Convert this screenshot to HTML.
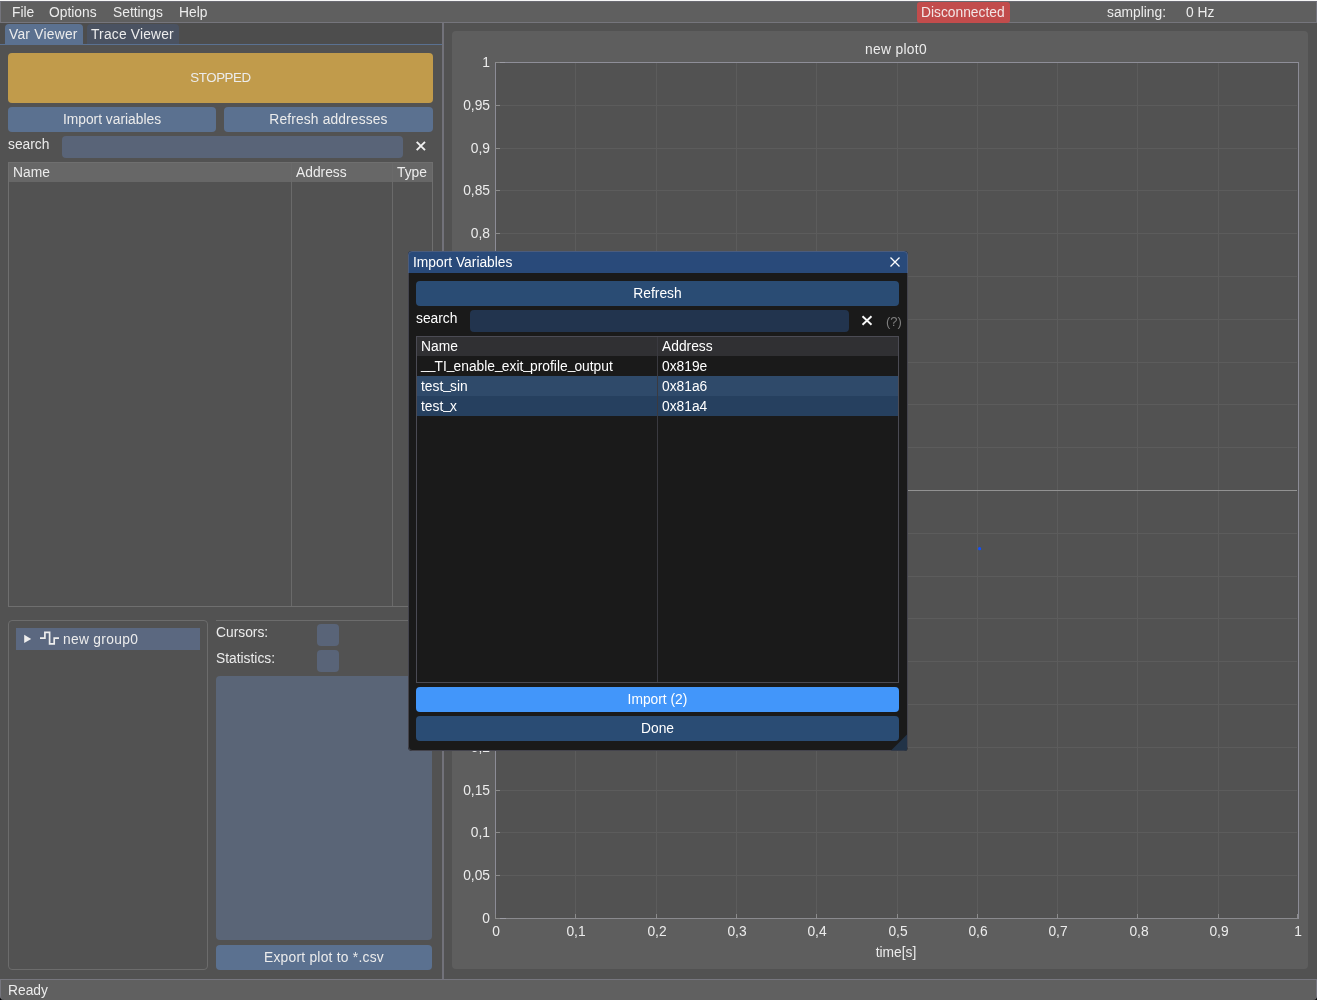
<!DOCTYPE html>
<html><head><meta charset="utf-8">
<style>
*{box-sizing:border-box;margin:0;padding:0}
html,body{width:1317px;height:1000px;overflow:hidden;background:#525252}
body{position:relative;font-family:"Liberation Sans",sans-serif;font-size:13.8px;color:#ececec}
.a{position:absolute}
.t{position:absolute;white-space:pre;line-height:18px;height:18px;will-change:transform}
.c{text-align:center}
.r{text-align:right}
.btn{position:absolute;border-radius:4px}
</style></head><body>
<!-- top white line -->
<div class="a" style="left:0;top:0;width:1317px;height:1px;background:#f6f6f6"></div>
<!-- menubar -->
<div class="a" style="left:0;top:1px;width:1317px;height:22px;background:#5f5f5f;border-top:1px solid #6a6a72;border-left:1px solid #74747c;border-right:1px solid #74747c;border-bottom:1px solid #75757c"></div>
<div class="t" style="left:12px;top:4px">File</div>
<div class="t" style="left:49px;top:4px">Options</div>
<div class="t" style="left:113px;top:4px">Settings</div>
<div class="t" style="left:179px;top:4px">Help</div>
<div class="btn" style="left:917px;top:2px;width:93px;height:21px;background:#c24c4c;border-radius:3px"></div>
<div class="t" style="left:921px;top:4px;color:#f2e6e6">Disconnected</div>
<div class="t" style="left:1107px;top:4px">sampling:</div>
<div class="t" style="left:1186px;top:4px">0 Hz</div>

<!-- left panel -->
<div class="a" style="left:0;top:23px;width:442px;height:21px;background:#4d4d4d"></div>
<div class="a" style="left:0;top:44px;width:442px;height:1px;background:#5a7191"></div>
<div class="a" style="left:5px;top:24px;width:78px;height:20px;background:#5b7190;border-radius:4px 4px 0 0"></div>
<div class="t" style="left:9px;top:26px;letter-spacing:0.25px">Var Viewer</div>
<div class="a" style="left:87px;top:24px;width:92px;height:20px;background:#4a5261;border-radius:4px 4px 0 0"></div>
<div class="t" style="left:91px;top:26px;letter-spacing:0.2px">Trace Viewer</div>

<div class="btn" style="left:8px;top:53px;width:425px;height:50px;background:#c19b4b"></div>
<div class="t c" style="left:8px;width:425px;top:69px;font-size:13.3px;letter-spacing:-0.4px">STOPPED</div>
<div class="btn" style="left:8px;top:107px;width:208px;height:25px;background:#5b7190"></div>
<div class="t c" style="left:8px;width:208px;top:111px">Import variables</div>
<div class="btn" style="left:224px;top:107px;width:209px;height:25px;background:#5b7190"></div>
<div class="t c" style="left:224px;width:209px;top:111px;letter-spacing:0.15px">Refresh addresses</div>
<div class="t" style="left:8px;top:136px">search</div>
<div class="btn" style="left:62px;top:136px;width:341px;height:22px;background:#596478"></div>
<svg class="a" style="left:0;top:0" width="443" height="1000"><path d="M416.7 141.9L425 150.2M425 141.9L416.7 150.2" stroke="#f0f0f0" stroke-width="1.9"/></svg>

<!-- left table -->
<div class="a" style="left:8px;top:162px;width:425px;height:445px;border:1px solid #6f6f6f"></div>
<div class="a" style="left:9px;top:163px;width:423px;height:19px;background:#676767"></div>
<div class="a" style="left:291px;top:163px;width:1px;height:443px;background:#6a6a6a"></div>
<div class="a" style="left:392px;top:163px;width:1px;height:443px;background:#6a6a6a"></div>
<div class="t" style="left:13px;top:164px">Name</div>
<div class="t" style="left:296px;top:164px">Address</div>
<div class="t" style="left:397px;top:164px">Type</div>

<!-- group panel -->
<div class="a" style="left:8px;top:620px;width:200px;height:350px;border:1px solid #6c6c6c;border-radius:4px"></div>
<div class="a" style="left:16px;top:628px;width:184px;height:22px;background:#5b6880"></div>
<svg class="a" style="left:0;top:600px" width="210" height="60"><path d="M24.2 34.8L31.2 38.9L24.2 43Z" fill="#eeeeee"/><path d="M40 38.2H44.9V32.3H49.6V43.9H54.2V38.2H59" stroke="#eeeeee" stroke-width="1.7" fill="none"/></svg>
<div class="t" style="left:63px;top:631px;letter-spacing:0.3px">new group0</div>

<!-- right panel -->
<div class="a" style="left:216px;top:620px;width:216px;height:1px;background:#6c6c6c"></div>
<div class="t" style="left:216px;top:624px">Cursors:</div>
<div class="btn" style="left:317px;top:624px;width:22px;height:22px;background:#596478"></div>
<div class="t" style="left:216px;top:650px">Statistics:</div>
<div class="btn" style="left:317px;top:650px;width:22px;height:22px;background:#596478"></div>
<div class="btn" style="left:216px;top:676px;width:216px;height:264px;background:#5a6577"></div>
<div class="btn" style="left:216px;top:945px;width:216px;height:25px;background:#5b7190"></div>
<div class="t c" style="left:216px;width:216px;top:949px;letter-spacing:0.25px">Export plot to *.csv</div>

<!-- separator -->
<div class="a" style="left:442px;top:23px;width:2px;height:956px;background:#72727a"></div>

<!-- plot frame -->
<div class="btn" style="left:452px;top:31px;width:856px;height:938px;background:#5e5e5e"></div>
<div class="t c" style="left:796px;width:200px;top:41px;letter-spacing:0.3px">new plot0</div>
<div class="a" style="left:495px;top:62px;width:804px;height:857px;background:#525252"></div>
<svg class="a" style="left:0;top:0" width="1317" height="1000" shape-rendering="crispEdges">
<path d="M575.5 62V918M656.5 62V918M736.5 62V918M816.5 62V918M897.5 62V918M977.5 62V918M1057.5 62V918M1137.5 62V918M1218.5 62V918M495 875.5H1297M495 832.5H1297M495 790.5H1297M495 747.5H1297M495 704.5H1297M495 661.5H1297M495 618.5H1297M495 576.5H1297M495 533.5H1297M495 490.5H1297M495 447.5H1297M495 404.5H1297M495 362.5H1297M495 319.5H1297M495 276.5H1297M495 233.5H1297M495 190.5H1297M495 148.5H1297M495 105.5H1297" stroke="#5c5c5c" stroke-width="1" fill="none"/>
<path d="M495 62.5H1299" stroke="#8e8e98" stroke-width="1" fill="none"/><path d="M495 918.5H1299" stroke="#8a8a8e" stroke-width="1" fill="none"/><path d="M495 62.5h10M495.5 918.5h10" stroke="#9c9ca4" stroke-width="1" fill="none"/><path d="M495.5 62V919M1298.5 62V919" stroke="#8c8c96" stroke-width="1" fill="none"/>
<path d="M495.5 918v-4M575.5 918v-4M656.5 918v-4M736.5 918v-4M816.5 918v-4M897.5 918v-4M977.5 918v-4M1057.5 918v-4M1137.5 918v-4M1218.5 918v-4M1297.5 918v-4M495 918.5h5M495 875.5h5M495 832.5h5M495 790.5h5M495 747.5h5M495 704.5h5M495 661.5h5M495 618.5h5M495 576.5h5M495 533.5h5M495 490.5h5M495 447.5h5M495 404.5h5M495 362.5h5M495 319.5h5M495 276.5h5M495 233.5h5M495 190.5h5M495 148.5h5M495 105.5h5M495 62.5h5" stroke="#8c8c8c" stroke-width="1" fill="none"/>
<path d="M496 490.5H1297" stroke="#929292" stroke-width="1.5" fill="none"/>
<circle cx="979.6" cy="548.7" r="1.6" fill="#1050ff" shape-rendering="auto"/>
</svg>
<div class="t c" style="left:465.5px;width:60px;top:923px">0</div>
<div class="t c" style="left:545.5px;width:60px;top:923px">0,1</div>
<div class="t c" style="left:626.5px;width:60px;top:923px">0,2</div>
<div class="t c" style="left:706.5px;width:60px;top:923px">0,3</div>
<div class="t c" style="left:786.5px;width:60px;top:923px">0,4</div>
<div class="t c" style="left:867.5px;width:60px;top:923px">0,5</div>
<div class="t c" style="left:947.5px;width:60px;top:923px">0,6</div>
<div class="t c" style="left:1027.5px;width:60px;top:923px">0,7</div>
<div class="t c" style="left:1108.5px;width:60px;top:923px">0,8</div>
<div class="t c" style="left:1188.5px;width:60px;top:923px">0,9</div>
<div class="t c" style="left:1267.5px;width:60px;top:923px">1</div>
<div class="t r" style="left:390px;width:100px;top:910.0px">0</div>
<div class="t r" style="left:390px;width:100px;top:867.0px">0,05</div>
<div class="t r" style="left:390px;width:100px;top:824.0px">0,1</div>
<div class="t r" style="left:390px;width:100px;top:782.0px">0,15</div>
<div class="t r" style="left:390px;width:100px;top:739.0px">0,2</div>
<div class="t r" style="left:390px;width:100px;top:696.0px">0,25</div>
<div class="t r" style="left:390px;width:100px;top:653.0px">0,3</div>
<div class="t r" style="left:390px;width:100px;top:610.0px">0,35</div>
<div class="t r" style="left:390px;width:100px;top:568.0px">0,4</div>
<div class="t r" style="left:390px;width:100px;top:525.0px">0,45</div>
<div class="t r" style="left:390px;width:100px;top:482.0px">0,5</div>
<div class="t r" style="left:390px;width:100px;top:439.0px">0,55</div>
<div class="t r" style="left:390px;width:100px;top:396.0px">0,6</div>
<div class="t r" style="left:390px;width:100px;top:354.0px">0,65</div>
<div class="t r" style="left:390px;width:100px;top:311.0px">0,7</div>
<div class="t r" style="left:390px;width:100px;top:268.0px">0,75</div>
<div class="t r" style="left:390px;width:100px;top:225.0px">0,8</div>
<div class="t r" style="left:390px;width:100px;top:182.0px">0,85</div>
<div class="t r" style="left:390px;width:100px;top:140.0px">0,9</div>
<div class="t r" style="left:390px;width:100px;top:97.0px">0,95</div>
<div class="t r" style="left:390px;width:100px;top:54.0px">1</div>
<div class="t c" style="left:796px;width:200px;top:944px">time[s]</div>

<!-- status bar -->
<div class="a" style="left:0;top:994px;width:6px;height:6px;background:#000"></div><div class="a" style="left:1311px;top:994px;width:6px;height:6px;background:#000"></div>
<div class="a" style="left:0;top:979px;width:1317px;height:21px;background:#606060;border:1px solid #76767e;border-bottom:none;border-radius:0 0 4px 4px"></div>
<div class="t" style="left:8px;top:982px">Ready</div>

<!-- dialog -->
<div class="a" style="left:408px;top:251px;width:500px;height:500px;background:#1a1a1a;border-radius:4px"></div>
<div class="a" style="left:408px;top:251px;width:500px;height:22px;background:#294a7a;border-radius:4px 4px 0 0"></div>
<div class="a" style="left:408px;top:251px;width:500px;height:500px;border-radius:4px;border:1px solid rgba(110,110,128,0.5)"></div>
<div class="t" style="color:#fff;left:413px;top:254px">Import Variables</div>
<svg class="a" style="left:880px;top:250px" width="30" height="24"><path d="M10.5 7.5L19.5 16.5M19.5 7.5L10.5 16.5" stroke="#ffffff" stroke-width="1.3"/></svg>
<div class="btn" style="left:416px;top:281px;width:483px;height:25px;background:#2a4c74"></div>
<div class="t c" style="color:#fff;left:416px;width:483px;top:285px">Refresh</div>
<div class="t" style="color:#fff;left:416px;top:310px">search</div>
<div class="btn" style="left:470px;top:310px;width:379px;height:22px;background:#22344e"></div>
<svg class="a" style="left:850px;top:305px" width="40" height="30"><path d="M12.5 11.2L21.5 19.8M21.5 11.2L12.5 19.8" stroke="#f8f8f8" stroke-width="1.9"/></svg>
<div class="t" style="left:886px;top:313px;color:#7f7f7f;font-size:13px">(?)</div>
<!-- dialog table -->
<div class="a" style="left:416px;top:336px;width:483px;height:347px;border:1px solid #4b4b54"></div>
<div class="a" style="left:417px;top:337px;width:481px;height:19px;background:#303033"></div>
<div class="a" style="left:417px;top:376px;width:481px;height:20px;background:#2f4a6a"></div>
<div class="a" style="left:417px;top:396px;width:481px;height:20px;background:#26405f"></div>
<div class="a" style="left:657px;top:337px;width:1px;height:345px;background:#3a3a40"></div>
<div class="t" style="color:#fff;left:421px;top:338px">Name</div>
<div class="t" style="color:#fff;left:662px;top:338px">Address</div>
<div class="t" style="color:#fff;left:421px;top:358px;"><span style="position:relative;top:-2px;letter-spacing:-0.9px">__</span>TI<span style="position:relative;top:-2px;letter-spacing:-0.9px">_</span>enable<span style="position:relative;top:-2px;letter-spacing:-0.9px">_</span>exit<span style="position:relative;top:-2px;letter-spacing:-0.9px">_</span>profile<span style="position:relative;top:-2px;letter-spacing:-0.9px">_</span>output</div>
<div class="t" style="color:#fff;left:662px;top:358px">0x819e</div>
<div class="t" style="color:#fff;left:421px;top:378px">test<span style="position:relative;top:-2px;letter-spacing:-0.9px">_</span>sin</div>
<div class="t" style="color:#fff;left:662px;top:378px">0x81a6</div>
<div class="t" style="color:#fff;left:421px;top:398px">test<span style="position:relative;top:-2px;letter-spacing:-0.9px">_</span>x</div>
<div class="t" style="color:#fff;left:662px;top:398px">0x81a4</div>
<div class="btn" style="left:416px;top:687px;width:483px;height:25px;background:#4296fa"></div>
<div class="t c" style="color:#fff;left:416px;width:483px;top:691px">Import (2)</div>
<div class="btn" style="left:416px;top:716px;width:483px;height:25px;background:#2a4c74"></div>
<div class="t c" style="color:#fff;left:416px;width:483px;top:720px">Done</div>
<svg class="a" style="left:880px;top:730px" width="30" height="22"><path d="M11 20.5L27 20.5L27 4.5Z" fill="#223347"/></svg>
</body></html>
